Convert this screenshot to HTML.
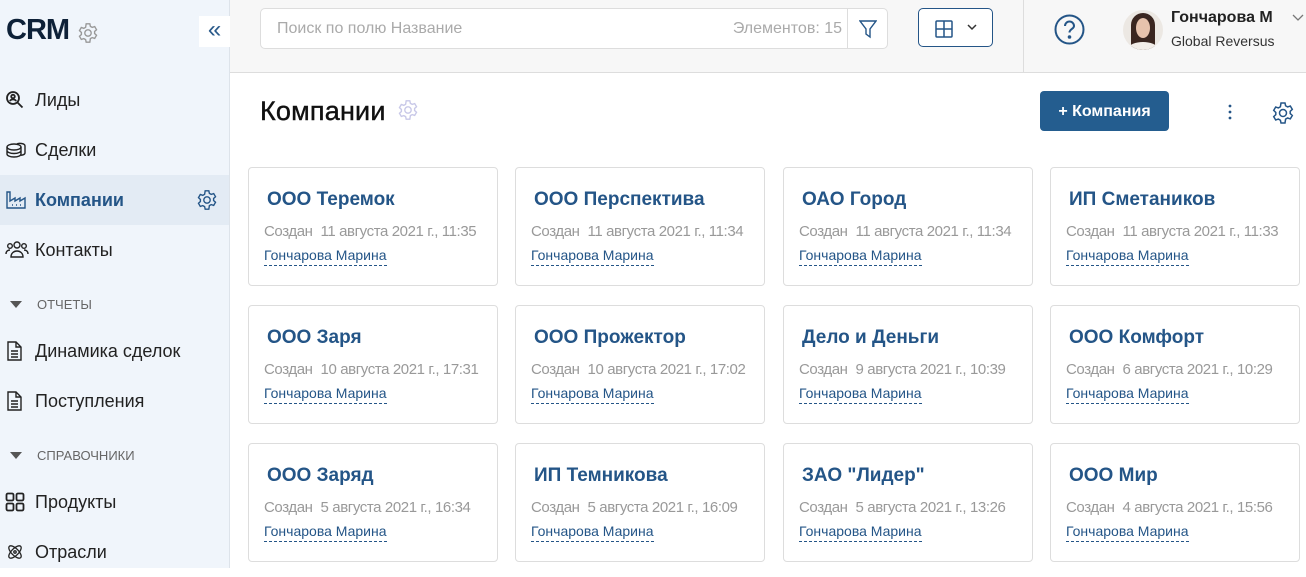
<!DOCTYPE html>
<html><head><meta charset="utf-8"><style>
*{box-sizing:border-box;margin:0;padding:0}
body{width:1306px;height:568px;overflow:hidden;font-family:"Liberation Sans",sans-serif;background:#fff;position:relative;color:#222}
.sb{position:absolute;left:0;top:0;width:230px;height:568px;background:#f0f5fb;border-right:1px solid #dde3ea}
.logo{position:absolute;left:6px;top:14px;font-size:29px;font-weight:bold;color:#0e2138;letter-spacing:-1px}
.coll{position:absolute;left:199px;top:16px;width:31px;height:31px;background:#fff;color:#2a5a8a;font-size:24px;text-align:center;line-height:28px}
.it{position:absolute;left:0;width:229px;height:50px;font-size:18px;color:#222;display:flex;align-items:center}
.it svg{position:absolute;left:5px}
.it span{position:absolute;left:35px}
.act{background:#e3ebf4}
.act span{color:#245587;font-weight:bold}
.sec{position:absolute;left:10px;font-size:13px;color:#666;display:flex;align-items:center}
.sec i{width:0;height:0;border-left:6px solid transparent;border-right:6px solid transparent;border-top:7px solid #555;margin-right:15px}
.hdr{position:absolute;left:230px;top:0;width:1076px;height:73px;background:#f7f7f7;border-bottom:1px solid #ddd}
.search{position:absolute;left:30px;top:8px;width:628px;height:41px;background:#fff;border:1px solid #ddd;border-radius:5px;font-size:16px;color:#aaa}
.search .p{position:absolute;left:16px;top:11px}
.search .c{position:absolute;right:45px;top:11px}
.search .f{position:absolute;right:0;top:0;width:40px;height:39px;border-left:1px solid #ddd}
.view{position:absolute;left:688px;top:8px;width:75px;height:39px;border:1px solid #245587;border-radius:5px;background:#fff}
.vsep{position:absolute;left:793px;top:0;width:1px;height:72px;background:#ddd}
.title{position:absolute;left:260px;top:96px;font-size:27px;color:#111;letter-spacing:.2px;-webkit-text-stroke:.4px #111}
.btn{position:absolute;left:1040px;top:91px;width:129px;height:40px;background:#245d8f;border-radius:4px;color:#fff;font-size:16px;font-weight:bold;text-align:center;line-height:42px}
.card{position:absolute;width:250px;height:119px;border:1px solid #ddd;border-radius:4px;background:#fff}
.card .t{position:absolute;left:18px;top:21px;font-size:19px;color:#245587;font-weight:bold;white-space:nowrap}
.card .d{position:absolute;left:15px;top:55px;font-size:15px;color:#999;white-space:nowrap;letter-spacing:-.4px}
.card .d b{font-weight:normal;margin-right:8px}
.card .n{position:absolute;left:15px;top:79px;font-size:14px;color:#245587;border-bottom:1px dashed #245587;padding-bottom:2px;white-space:nowrap}
</style></head><body>
<div class="sb">
<div class="logo">CRM</div>
<svg style="position:absolute;left:77px;top:22px" width="22" height="22" viewBox="0 0 24 24" fill="none" stroke="#999" stroke-width="1.5"><circle cx="12" cy="12" r="3.5"/><path d="M10 2h4l.6 2.8 2 1.1 2.7-.9 2 3.4-2.1 1.9v2.3l2.1 1.9-2 3.4-2.7-.9-2 1.1L14 22h-4l-.6-2.8-2-1.1-2.7.9-2-3.4 2.1-1.9v-2.3L2.7 9.4l2-3.4 2.7.9 2-1.1z"/></svg>
<div class="coll">«</div>
<div class="it" style="top:75px"><svg width="20" height="20" viewBox="0 0 20 20" fill="none" stroke="#222" stroke-width="1.8"><circle cx="8" cy="8" r="6"/><path d="M12.5 12.5l5 5"/><circle cx="8" cy="6.5" r="1.8"/><path d="M4.8 11a4 4 0 016.4 0"/></svg><span>Лиды</span></div>
<div class="it" style="top:125px"><svg width="22" height="20" viewBox="0 0 22 20" fill="none" stroke="#222" stroke-width="1.4"><ellipse cx="9" cy="7" rx="7" ry="3"/><path d="M2 7v7c0 1.7 3 3 7 3s7-1.3 7-3V7M2 10.5c0 1.7 3 3 7 3s7-1.3 7-3"/><path d="M12 4c1-1 8-1 8 2v7c0 1-1.5 2-4 2.3"/></svg><span>Сделки</span></div>
<div class="it act" style="top:175px"><svg width="22" height="20" viewBox="0 0 22 20" fill="none" stroke="#245587" stroke-width="1.4"><path d="M2 2v16h18V8l-5 3V8l-5 3V8l-5 3V2z"/><path d="M7 15h1M11 15h1M15 15h1"/></svg><span>Компании</span>
<svg style="left:196px" width="22" height="22" viewBox="0 0 24 24" fill="none" stroke="#245587" stroke-width="1.5"><circle cx="12" cy="12" r="3.5"/><path d="M10 2h4l.6 2.8 2 1.1 2.7-.9 2 3.4-2.1 1.9v2.3l2.1 1.9-2 3.4-2.7-.9-2 1.1L14 22h-4l-.6-2.8-2-1.1-2.7.9-2-3.4 2.1-1.9v-2.3L2.7 9.4l2-3.4 2.7.9 2-1.1z"/></svg></div>
<div class="it" style="top:225px"><svg width="24" height="20" viewBox="0 0 24 20" fill="none" stroke="#222" stroke-width="1.4"><circle cx="12" cy="5" r="3"/><circle cx="5" cy="6" r="2.3"/><circle cx="19" cy="6" r="2.3"/><path d="M6 17c0-4 3-6 6-6s6 2 6 6zM1 14c0-3 2-4 4-4M23 14c0-3-2-4-4-4"/></svg><span>Контакты</span></div>
<div class="sec" style="top:297px"><i></i>ОТЧЕТЫ</div>
<div class="it" style="top:326px"><svg width="18" height="22" viewBox="0 0 18 22" fill="none" stroke="#222" stroke-width="1.4"><path d="M3 2h8l5 5v13H3z"/><path d="M11 2v5h5M6 11h7M6 14h7M6 17h7"/></svg><span>Динамика сделок</span></div>
<div class="it" style="top:376px"><svg width="18" height="22" viewBox="0 0 18 22" fill="none" stroke="#222" stroke-width="1.4"><path d="M3 2h8l5 5v13H3z"/><path d="M11 2v5h5M6 11h7M6 14h7M6 17h7"/></svg><span>Поступления</span></div>
<div class="sec" style="top:448px"><i></i>СПРАВОЧНИКИ</div>
<div class="it" style="top:477px"><svg width="20" height="20" viewBox="0 0 20 20" fill="none" stroke="#222" stroke-width="1.8"><rect x="1.5" y="1.5" width="7" height="7" rx="1.5"/><rect x="11.5" y="1.5" width="7" height="7" rx="1.5"/><rect x="1.5" y="11.5" width="7" height="7" rx="1.5"/><rect x="11.5" y="11.5" width="7" height="7" rx="1.5"/></svg><span>Продукты</span></div>
<div class="it" style="top:527px"><svg width="20" height="20" viewBox="0 0 20 20" fill="none" stroke="#222" stroke-width="1.3"><ellipse cx="10" cy="10" rx="8" ry="3.5" transform="rotate(45 10 10)"/><ellipse cx="10" cy="10" rx="8" ry="3.5" transform="rotate(-45 10 10)"/><circle cx="10" cy="10" r="1.2"/></svg><span>Отрасли</span></div>
</div>

<div class="hdr">
<div class="search"><span class="p">Поиск по полю Название</span><span class="c">Элементов: 15</span><div class="f"><svg style="position:absolute;left:11px;top:10px" width="18" height="20" viewBox="0 0 18 20" fill="none" stroke="#245587" stroke-width="1.4"><path d="M1 2h16l-6 8v8l-4-3v-5z"/></svg></div></div>
<div class="view"><svg style="position:absolute;left:16px;top:11px" width="18" height="18" viewBox="0 0 18 18" fill="none" stroke="#245587" stroke-width="1.5"><rect x="1" y="1" width="16" height="16" rx="1"/><path d="M9 1v16M1 9h16"/></svg><svg style="position:absolute;left:48px;top:15px" width="10" height="7" viewBox="0 0 10 7" fill="none" stroke="#333" stroke-width="1.5"><path d="M1 1l4 4 4-4"/></svg></div>
<div class="vsep"></div>
<svg style="position:absolute;left:824px;top:14px" width="31" height="31" viewBox="0 0 31 31" fill="none" stroke="#245587" stroke-width="2"><circle cx="15.5" cy="15.5" r="14"/><path d="M11 12a4.5 4.5 0 119 0c0 3-4.5 3-4.5 6.5"/><circle cx="15.5" cy="23" r=".8" fill="#245587"/></svg>
<div style="position:absolute;left:893px;top:10px;width:40px;height:40px;border-radius:50%;background:#ece8e3;overflow:hidden"><div style="position:absolute;left:8px;top:3px;width:24px;height:38px;border-radius:12px 12px 6px 6px;background:#3a2620"></div><div style="position:absolute;left:13px;top:8px;width:14px;height:20px;border-radius:50%;background:#e6c2ac"></div><div style="position:absolute;left:6px;top:32px;width:28px;height:12px;border-radius:50% 50% 0 0;background:#f2ede8"></div></div>
<div style="position:absolute;left:941px;top:9px;font-size:16px;font-weight:bold;color:#222">Гончарова М</div>
<svg style="position:absolute;left:1062px;top:14px" width="12" height="8" viewBox="0 0 12 8" fill="none" stroke="#777" stroke-width="1.3"><path d="M1 1l5 5 5-5"/></svg>
<div style="position:absolute;left:941px;top:33px;font-size:14px;color:#333">Global Reversus</div>
</div>

<div class="title">Компании</div>
<svg style="position:absolute;left:397px;top:99px" width="22" height="22" viewBox="0 0 24 24" fill="none" stroke="#c8c8e8" stroke-width="1.5"><circle cx="12" cy="12" r="3.5"/><path d="M10 2h4l.6 2.8 2 1.1 2.7-.9 2 3.4-2.1 1.9v2.3l2.1 1.9-2 3.4-2.7-.9-2 1.1L14 22h-4l-.6-2.8-2-1.1-2.7.9-2-3.4 2.1-1.9v-2.3L2.7 9.4l2-3.4 2.7.9 2-1.1z"/></svg>
<div class="btn">+ Компания</div>
<svg style="position:absolute;left:1227px;top:103px" width="6" height="18" viewBox="0 0 6 18" fill="#245587"><circle cx="3" cy="3" r="1.4"/><circle cx="3" cy="9" r="1.4"/><circle cx="3" cy="15" r="1.4"/></svg>
<svg style="position:absolute;left:1271px;top:101px" width="24" height="24" viewBox="0 0 24 24" fill="none" stroke="#245587" stroke-width="1.5"><circle cx="12" cy="12" r="3.5"/><path d="M10 2h4l.6 2.8 2 1.1 2.7-.9 2 3.4-2.1 1.9v2.3l2.1 1.9-2 3.4-2.7-.9-2 1.1L14 22h-4l-.6-2.8-2-1.1-2.7.9-2-3.4 2.1-1.9v-2.3L2.7 9.4l2-3.4 2.7.9 2-1.1z"/></svg>

<div class="card" style="left:248px;top:167px"><div class="t">ООО Теремок</div><div class="d"><b>Создан</b>11 августа 2021 г., 11:35</div><div class="n">Гончарова Марина</div></div>
<div class="card" style="left:515px;top:167px"><div class="t">ООО Перспектива</div><div class="d"><b>Создан</b>11 августа 2021 г., 11:34</div><div class="n">Гончарова Марина</div></div>
<div class="card" style="left:783px;top:167px"><div class="t">ОАО Город</div><div class="d"><b>Создан</b>11 августа 2021 г., 11:34</div><div class="n">Гончарова Марина</div></div>
<div class="card" style="left:1050px;top:167px"><div class="t">ИП Сметаников</div><div class="d"><b>Создан</b>11 августа 2021 г., 11:33</div><div class="n">Гончарова Марина</div></div>
<div class="card" style="left:248px;top:305px"><div class="t">ООО Заря</div><div class="d"><b>Создан</b>10 августа 2021 г., 17:31</div><div class="n">Гончарова Марина</div></div>
<div class="card" style="left:515px;top:305px"><div class="t">ООО Прожектор</div><div class="d"><b>Создан</b>10 августа 2021 г., 17:02</div><div class="n">Гончарова Марина</div></div>
<div class="card" style="left:783px;top:305px"><div class="t">Дело и Деньги</div><div class="d"><b>Создан</b>9 августа 2021 г., 10:39</div><div class="n">Гончарова Марина</div></div>
<div class="card" style="left:1050px;top:305px"><div class="t">ООО Комфорт</div><div class="d"><b>Создан</b>6 августа 2021 г., 10:29</div><div class="n">Гончарова Марина</div></div>
<div class="card" style="left:248px;top:443px"><div class="t">ООО Заряд</div><div class="d"><b>Создан</b>5 августа 2021 г., 16:34</div><div class="n">Гончарова Марина</div></div>
<div class="card" style="left:515px;top:443px"><div class="t">ИП Темникова</div><div class="d"><b>Создан</b>5 августа 2021 г., 16:09</div><div class="n">Гончарова Марина</div></div>
<div class="card" style="left:783px;top:443px"><div class="t">ЗАО "Лидер"</div><div class="d"><b>Создан</b>5 августа 2021 г., 13:26</div><div class="n">Гончарова Марина</div></div>
<div class="card" style="left:1050px;top:443px"><div class="t">ООО Мир</div><div class="d"><b>Создан</b>4 августа 2021 г., 15:56</div><div class="n">Гончарова Марина</div></div>
</body></html>
